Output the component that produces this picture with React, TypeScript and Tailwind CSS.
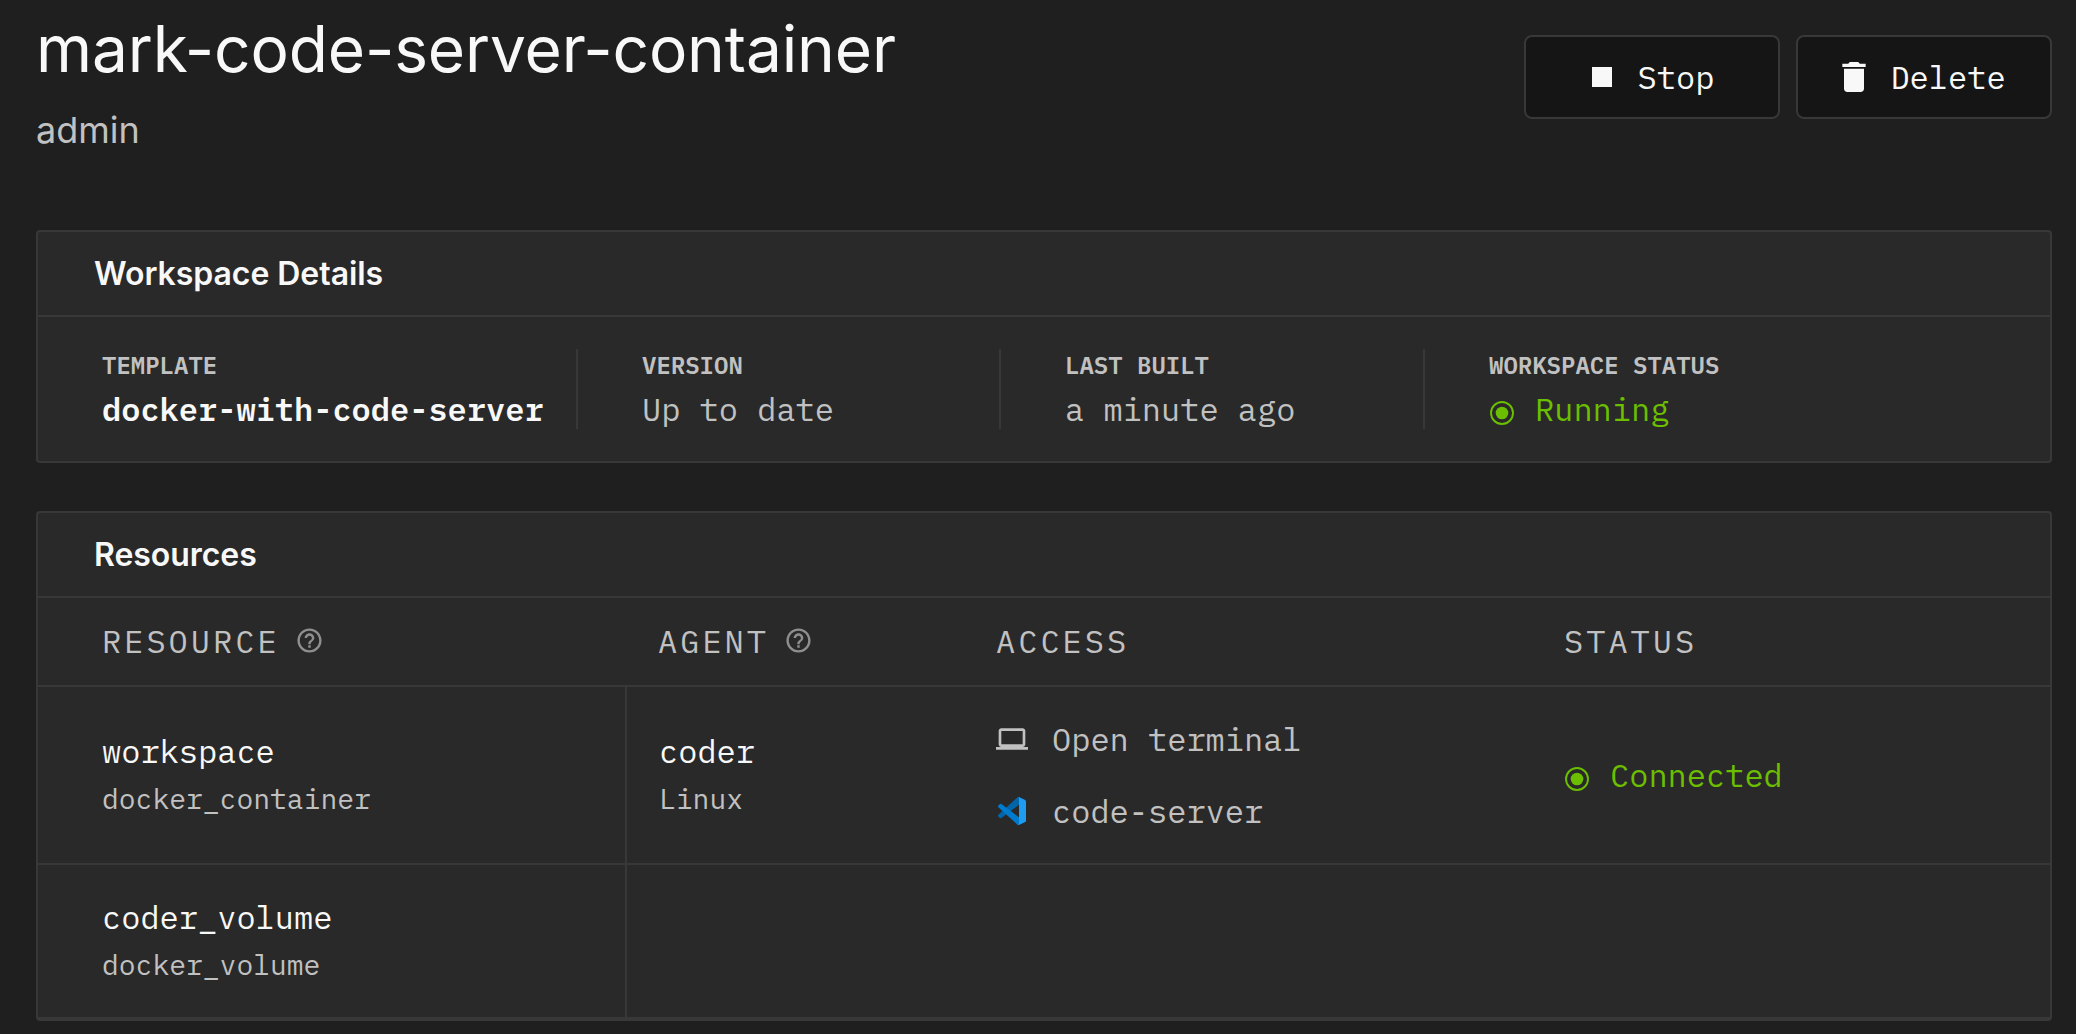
import type { ReactNode } from "react";

const mono = "font-['IBM_Plex_Mono','Liberation_Mono',monospace]";

function StopIcon() {
  return (
    <svg viewBox="0 0 24 24" className="-ml-2 size-10 shrink-0 fill-current">
      <path d="M6 6h12v12H6z" />
    </svg>
  );
}

function DeleteIcon() {
  return (
    <svg viewBox="0 0 24 24" className="-ml-2 size-10 shrink-0 fill-current">
      <path d="M6 19c0 1.1.9 2 2 2h8c1.1 0 2-.9 2-2V7H6v12zM19 4h-3.5l-1-1h-5l-1 1H5v2h14V4z" />
    </svg>
  );
}

function HelpIcon() {
  return (
    <svg viewBox="0 0 24 24" className="size-[29px] shrink-0 fill-[#8f8f8f]">
      <path d="M11 18h2v-2h-2v2zm1-16C6.48 2 2 6.48 2 12s4.480 10 10 10 10-4.480 10-10S17.520 2 12 2zm0 18c-4.410 0-8-3.590-8-8s3.590-8 8-8 8 3.590 8 8-3.590 8-8 8zm0-14c-2.210 0-4 1.790-4 4h2c0-1.100.9-2 2-2s2 .9 2 2c0 2-3 1.750-3 5h2c0-2.250 3-2.500 3-5 0-2.210-1.790-4-4-4z" />
    </svg>
  );
}

function ComputerIcon() {
  return (
    <svg viewBox="0 0 24 24" className="size-8 shrink-0 fill-current">
      <path d="M20 18c1.1 0 1.99-.9 1.99-2L22 6c0-1.1-.9-2-2-2H4c-1.1 0-2 .9-2 2v10c0 1.1.9 2 2 2H0v2h24v-2h-4zM4 6h16v10H4V6z" />
    </svg>
  );
}

function CodeIcon() {
  return (
    <svg viewBox="0 0 100 100" className="mx-0.5 size-7 shrink-0">
      <path
        fill="#0065A9"
        d="M96.460 10.800 75.860.88a6.230 6.230 0 0 0-7.100 1.200L1.300 63.580a4.170 4.170 0 0 0 0 6.160l5.510 5.010a4.170 4.170 0 0 0 5.320.24L93.360 13.360c2.720-2.070 6.640-.13 6.640 3.300v-.24a6.250 6.250 0 0 0-3.540-5.620z"
      />
      <path
        fill="#007ACC"
        d="m96.460 89.200-20.600 9.920a6.230 6.230 0 0 1-7.100-1.200L1.300 36.420a4.170 4.170 0 0 1 0-6.160l5.510-5.010a4.170 4.170 0 0 1 5.320-.24l81.230 61.630c2.720 2.070 6.640.13 6.640-3.300v.24a6.250 6.250 0 0 1-3.540 5.620z"
      />
      <path
        fill="#1F9CF0"
        d="M75.860 99.130a6.230 6.230 0 0 1-7.110-1.210c2.310 2.310 6.250.68 6.250-2.580V4.660c0-3.260-3.940-4.890-6.250-2.590a6.230 6.230 0 0 1 7.110-1.200l20.600 9.900A6.250 6.250 0 0 1 100 16.410v67.170c0 2.400-1.380 4.590-3.540 5.630z"
      />
    </svg>
  );
}

function StatusIcon() {
  return (
    <svg viewBox="0 0 24 24" className="mt-2 size-6 shrink-0">
      <circle cx="12" cy="12" r="11" fill="none" stroke="currentColor" strokeWidth="1.9" />
      <circle cx="12" cy="12" r="6.300" fill="currentColor" />
    </svg>
  );
}

function ActionButton({ icon, label }: { icon: ReactNode; label: string }) {
  return (
    <button className="flex h-[84px] w-64 items-center justify-center gap-4 rounded-lg border-2 border-[#383838] bg-[#151515] text-[#f8f8f8]">
      {icon}
      <span>{label}</span>
    </button>
  );
}

function Panel({ title, className, children }: { title: string; className: string; children: ReactNode }) {
  return (
    <section className={`rounded border-2 border-[#383838] bg-[#292929] ${className}`}>
      <h2 className="flex h-[85px] items-center border-b-2 border-[#383838] pl-14 font-['Inter',sans-serif] font-semibold tracking-[-0.05px] text-[#f8f8f8]">
        {title}
      </h2>
      {children}
    </section>
  );
}

function Stat({ label, className, children }: { label: string; className: string; children: ReactNode }) {
  return (
    <div className={`h-20 shrink-0 border-[#383838] ${className}`}>
      <div className="text-[24px] leading-8 font-semibold">{label}</div>
      <div className="mt-2 leading-10 whitespace-nowrap">{children}</div>
    </div>
  );
}

function Status({ children }: { children: ReactNode }) {
  return (
    <div className="flex items-center gap-[21px] pl-px text-[#6bbe00]">
      <StatusIcon />
      <span>{children}</span>
    </div>
  );
}

function NameCell({ name, kind, className }: { name: string; kind: string; className: string }) {
  return (
    <div className={className}>
      <div className="leading-[44px] text-[#f8f8f8]">{name}</div>
      <div className="text-[28px] leading-[51px]">{kind}</div>
    </div>
  );
}

const columns = "grid grid-cols-[589px_337px_568px_1fr]";

export default function App() {
  return (
    <main className={`h-[1034px] overflow-hidden bg-[#1f1f1f] px-6 pl-9 text-[32px] leading-10 text-[#c1c1c1] ${mono}`}>
      <header className="flex h-[230px] items-start justify-between">
        <div className="font-['Inter',sans-serif]">
          <h1 className="pt-[9px] text-[64px] leading-[80px] tracking-[-0.14px] text-[#f8f8f8]">
            mark-code-server-container
          </h1>
          <p className="pt-[17px] text-[36px] leading-[48px]">admin</p>
        </div>
        <div className="flex gap-4 pt-[35px]">
          <ActionButton icon={<StopIcon />} label="Stop" />
          <ActionButton icon={<DeleteIcon />} label="Delete" />
        </div>
      </header>

      <Panel title="Workspace Details" className="h-[233px]">
        <div className="flex pt-8">
          <Stat label="TEMPLATE" className="w-[540px] border-r-2 pl-16">
            <span className="font-semibold text-[#f8f8f8]">docker-with-code-server</span>
          </Stat>
          <Stat label="VERSION" className="w-[423px] border-r-2 pl-16">Up to date</Stat>
          <Stat label="LAST BUILT" className="w-[424px] border-r-2 pl-16">a minute ago</Stat>
          <Stat label="WORKSPACE STATUS" className="pl-16">
            <Status>Running</Status>
          </Stat>
        </div>
      </Panel>

      <Panel title="Resources" className="mt-12 h-[510px]">
        <div className={`${columns} h-[89px] border-b-2 border-[#383838] pb-0.5 tracking-[3px]`}>
          <div className="flex items-center gap-[15px] pl-16">
            <span>RESOURCE</span>
            <HelpIcon />
          </div>
          <div className="flex items-center gap-[15px] pl-[31px]">
            <span>AGENT</span>
            <HelpIcon />
          </div>
          <div className="flex items-center pl-8">ACCESS</div>
          <div className="flex items-center pl-8">STATUS</div>
        </div>
        <div className={`${columns} h-[178px] border-b-2 border-[#383838]`}>
          <NameCell name="workspace" kind="docker_container" className="border-r-2 border-[#383838] pt-[42px] pl-16" />
          <NameCell name="coder" kind="Linux" className="pt-[42px] pl-8" />
          <div className="flex flex-col py-4 pl-8">
            <a className="flex h-[72px] items-center gap-6">
              <ComputerIcon />
              <span>Open terminal</span>
            </a>
            <a className="flex h-[72px] items-center gap-6">
              <CodeIcon />
              <span>code-server</span>
            </a>
          </div>
          <div className="flex items-center pl-8">
            <Status>Connected</Status>
          </div>
        </div>
        <div className={`${columns} h-[154px] border-b-2 border-[#383838]`}>
          <NameCell name="coder_volume" kind="docker_volume" className="border-r-2 border-[#383838] pt-[30px] pl-16" />
        </div>
      </Panel>
    </main>
  );
}
